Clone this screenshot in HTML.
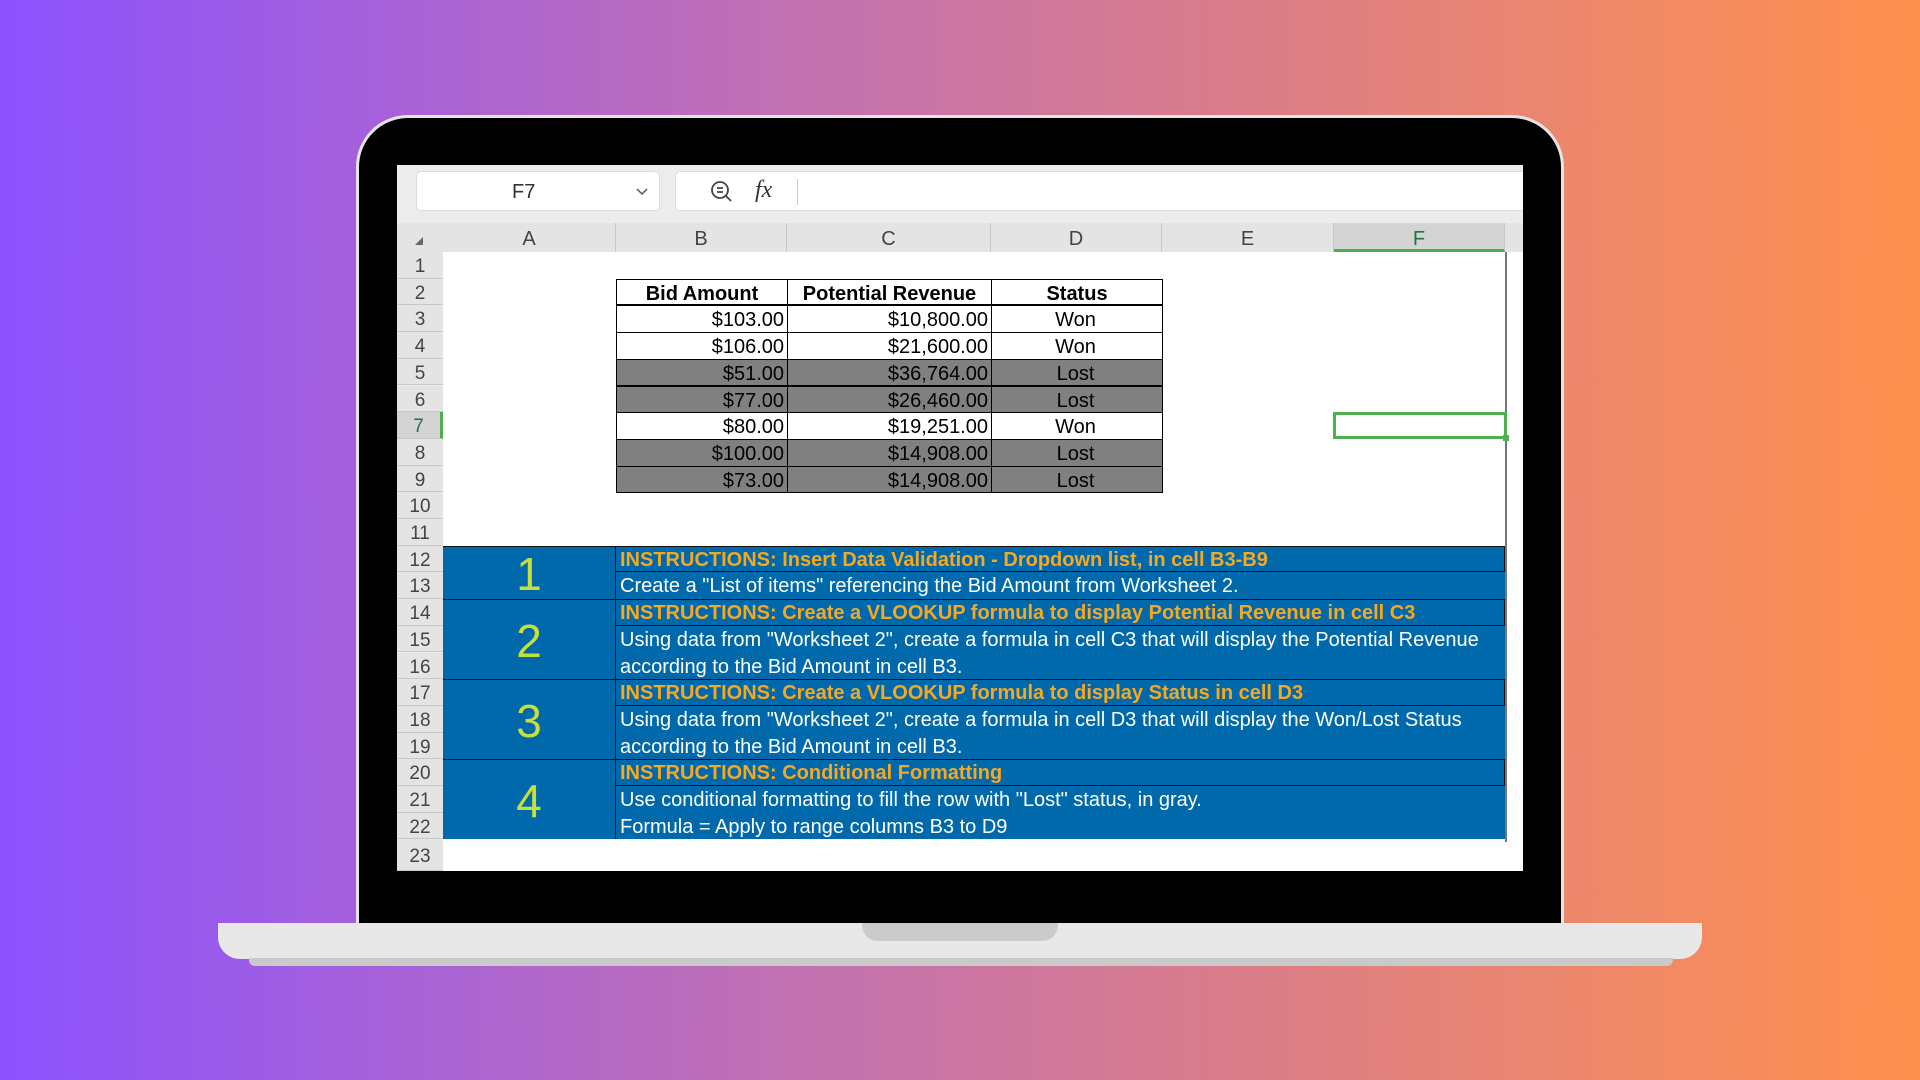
<!DOCTYPE html>
<html><head><meta charset="utf-8"><style>
*{margin:0;padding:0;box-sizing:border-box}
body{width:1920px;height:1080px;overflow:hidden;position:relative;background:linear-gradient(90deg,#8c52ff 0%,#c070b4 40%,#e08080 70%,#ff914d 100%);font-family:"Liberation Sans",Arial,sans-serif}
.a{position:absolute}
.bezel{left:356px;top:115px;width:1208px;height:815px;background:#000;border-radius:52px 52px 0 0;border:3px solid #e4e4e4;border-bottom:none}
.base{left:218px;top:923px;width:1484px;height:36px;background:#e8e8e8;border-radius:0 0 22px 22px}
.shadow{left:249px;top:958px;width:1424px;height:8px;background:#cacaca;border-radius:0 0 6px 6px}
.notch{left:862px;top:923px;width:196px;height:18px;background:#cbcbcb;border-radius:0 0 16px 16px}
.screen{left:397px;top:165px;width:1126px;height:706px;background:#ececec;overflow:hidden}
.box{background:#fff;border-radius:5px;border:1px solid #ddd}
.ch{top:58px;height:29px;background:#e4e4e4;color:#444;font-size:20px;text-align:center;line-height:33px;border-right:1px solid #c8c8c8}
.rh{left:0;width:46px;background:#e4e4e4;color:#444;font-size:19px;text-align:center;border-bottom:1px solid #c8c8c8}
.sheet{left:46px;top:87px;width:1080px;height:619px;background:#fff}
.c{position:absolute;height:26.7px;line-height:29px;font-size:20px;white-space:nowrap;overflow:hidden}
</style></head><body>
<div class="a bezel"></div>
<div class="a base"></div>
<div class="a shadow"></div>
<div class="a notch"></div>
<div class="a screen">
  <div class="a box" style="left:19px;top:6px;width:244px;height:40px"></div>
  <div class="a" style="left:115px;top:16px;font-size:20px;color:#333">F7</div>
  <svg class="a" style="left:238px;top:20px" width="14" height="14"><path d="M2 4l5 5 5-5" fill="none" stroke="#555" stroke-width="1.5"/></svg>
  <div class="a box" style="left:278px;top:6px;width:860px;height:40px"></div>
  <svg class="a" style="left:312px;top:14px" width="26" height="26"><circle cx="11" cy="11" r="8" fill="none" stroke="#444" stroke-width="1.8"/><path d="M17 17l5 5M8 9h6M8 13h6" stroke="#444" stroke-width="1.8"/></svg>
  <div class="a" style="left:358px;top:12px;font-size:24px;font-style:italic;font-family:'Liberation Serif',serif;color:#333">fx</div>
  <div class="a" style="left:400px;top:14px;width:1px;height:26px;background:#ccc"></div>
  <div class="a" style="left:0;top:58px;width:1126px;height:29px;background:#e4e4e4"></div>
  <svg class="a" style="left:16px;top:70px" width="12" height="12"><path d="M10 2L10 10 2 10z" fill="#666"/></svg>
  <div class="a ch" style="left:46px;width:173px">A</div>
  <div class="a ch" style="left:219px;width:171px">B</div>
  <div class="a ch" style="left:390px;width:204px">C</div>
  <div class="a ch" style="left:594px;width:171px">D</div>
  <div class="a ch" style="left:765px;width:172px">E</div>
  <div class="a ch" style="left:937px;width:171px;background:#d4d4d4;color:#217346;border-bottom:3px solid #4caf50">F</div>
  <div class="a sheet"></div>
  <div class="a" style="left:1108px;top:87px;width:2px;height:590px;background:#777"></div>
</div>
<div class="a" style="left:397px;top:165px;width:1126px;height:706px" id="g"></div>
<script>
var g=document.getElementById('g'),h='';
var R=function(n){return 87+(n-1)*26.7};
for(var n=1;n<=23;n++){var t=R(n),hh=n==23?32:26.7;
h+='<div class="a rh" style="top:'+t+'px;height:'+hh+'px;line-height:'+(hh+4)+'px;'+(n==7?'color:#217346;background:#d4d4d4;border-right:3px solid #4caf50':'')+'">'+n+'</div>';}
var data=[["$103.00","$10,800.00","Won"],["$106.00","$21,600.00","Won"],["$51.00","$36,764.00","Lost"],["$77.00","$26,460.00","Lost"],["$80.00","$19,251.00","Won"],["$100.00","$14,908.00","Lost"],["$73.00","$14,908.00","Lost"]];
var cols=[[219,171],[390,204],[594,171]];
var hd=["Bid Amount","Potential Revenue","Status"];
for(var i=0;i<3;i++)h+='<div class="c" style="left:'+cols[i][0]+'px;top:'+R(2)+'px;width:'+(cols[i][1]+1)+'px;border:1.5px solid #000;text-align:center;font-weight:bold;background:#fff">'+hd[i]+'</div>';
data.forEach(function(r,j){var bg=r[2]=='Lost'?'#808080':'#fff';for(var i=0;i<3;i++)h+='<div class="c" style="left:'+cols[i][0]+'px;top:'+R(3+j)+'px;width:'+(cols[i][1]+1)+'px;height:27.7px;border:1.5px solid #000;background:'+bg+';text-align:'+(i==2?'center':'right')+';padding-right:3px">'+r[i]+'</div>';});
h+='<div class="a" style="left:936px;top:'+(R(7))+'px;width:174px;height:27px;border:3px solid #4caf50"></div><div class="a" style="left:1106px;top:'+(R(7)+23)+'px;width:6px;height:6px;background:#4caf50"></div>';
var blocks=[[12,1,"INSTRUCTIONS: Insert Data Validation - Dropdown list, in cell B3-B9",['Create a "List of items" referencing the Bid Amount from Worksheet 2.']],
[14,2,"INSTRUCTIONS: Create a VLOOKUP formula to display Potential Revenue in cell C3",['Using data from "Worksheet 2", create a formula in cell C3 that will display the Potential Revenue','according to the Bid Amount in cell B3.']],
[17,3,"INSTRUCTIONS: Create a VLOOKUP formula to display Status in cell D3",['Using data from "Worksheet 2", create a formula in cell D3 that will display the Won/Lost Status','according to the Bid Amount in cell B3.']],
[20,4,"INSTRUCTIONS: Conditional Formatting",['Use conditional formatting to fill the row with "Lost" status, in gray.','Formula = Apply to range columns B3 to D9']]];
blocks.forEach(function(b){var n=b[0],rows=1+b[3].length,t=R(n),H=rows*26.7;
h+='<div class="a" style="left:46px;top:'+t+'px;width:1062px;height:'+H+'px;background:#0069ab;border-top:1.5px solid #111"></div>';
h+='<div class="a" style="left:46px;top:'+t+'px;width:173px;height:'+H+'px;border-right:1.5px solid #111;color:#c5e03a;font-size:46px;text-align:center;line-height:'+(H+4)+'px">'+b[1]+'</div>';
h+='<div class="c" style="left:219px;top:'+t+'px;width:889px;border-bottom:1.5px solid #111;border-right:1.5px solid #111;color:#f6a821;font-weight:bold;padding-left:4px">'+b[2]+'</div>';
b[3].forEach(function(s,k){h+='<div class="c" style="left:219px;top:'+R(n+1+k)+'px;width:889px;color:#fff;padding-left:4px">'+s+'</div>';});});
g.innerHTML=h;
</script>
</body></html>
